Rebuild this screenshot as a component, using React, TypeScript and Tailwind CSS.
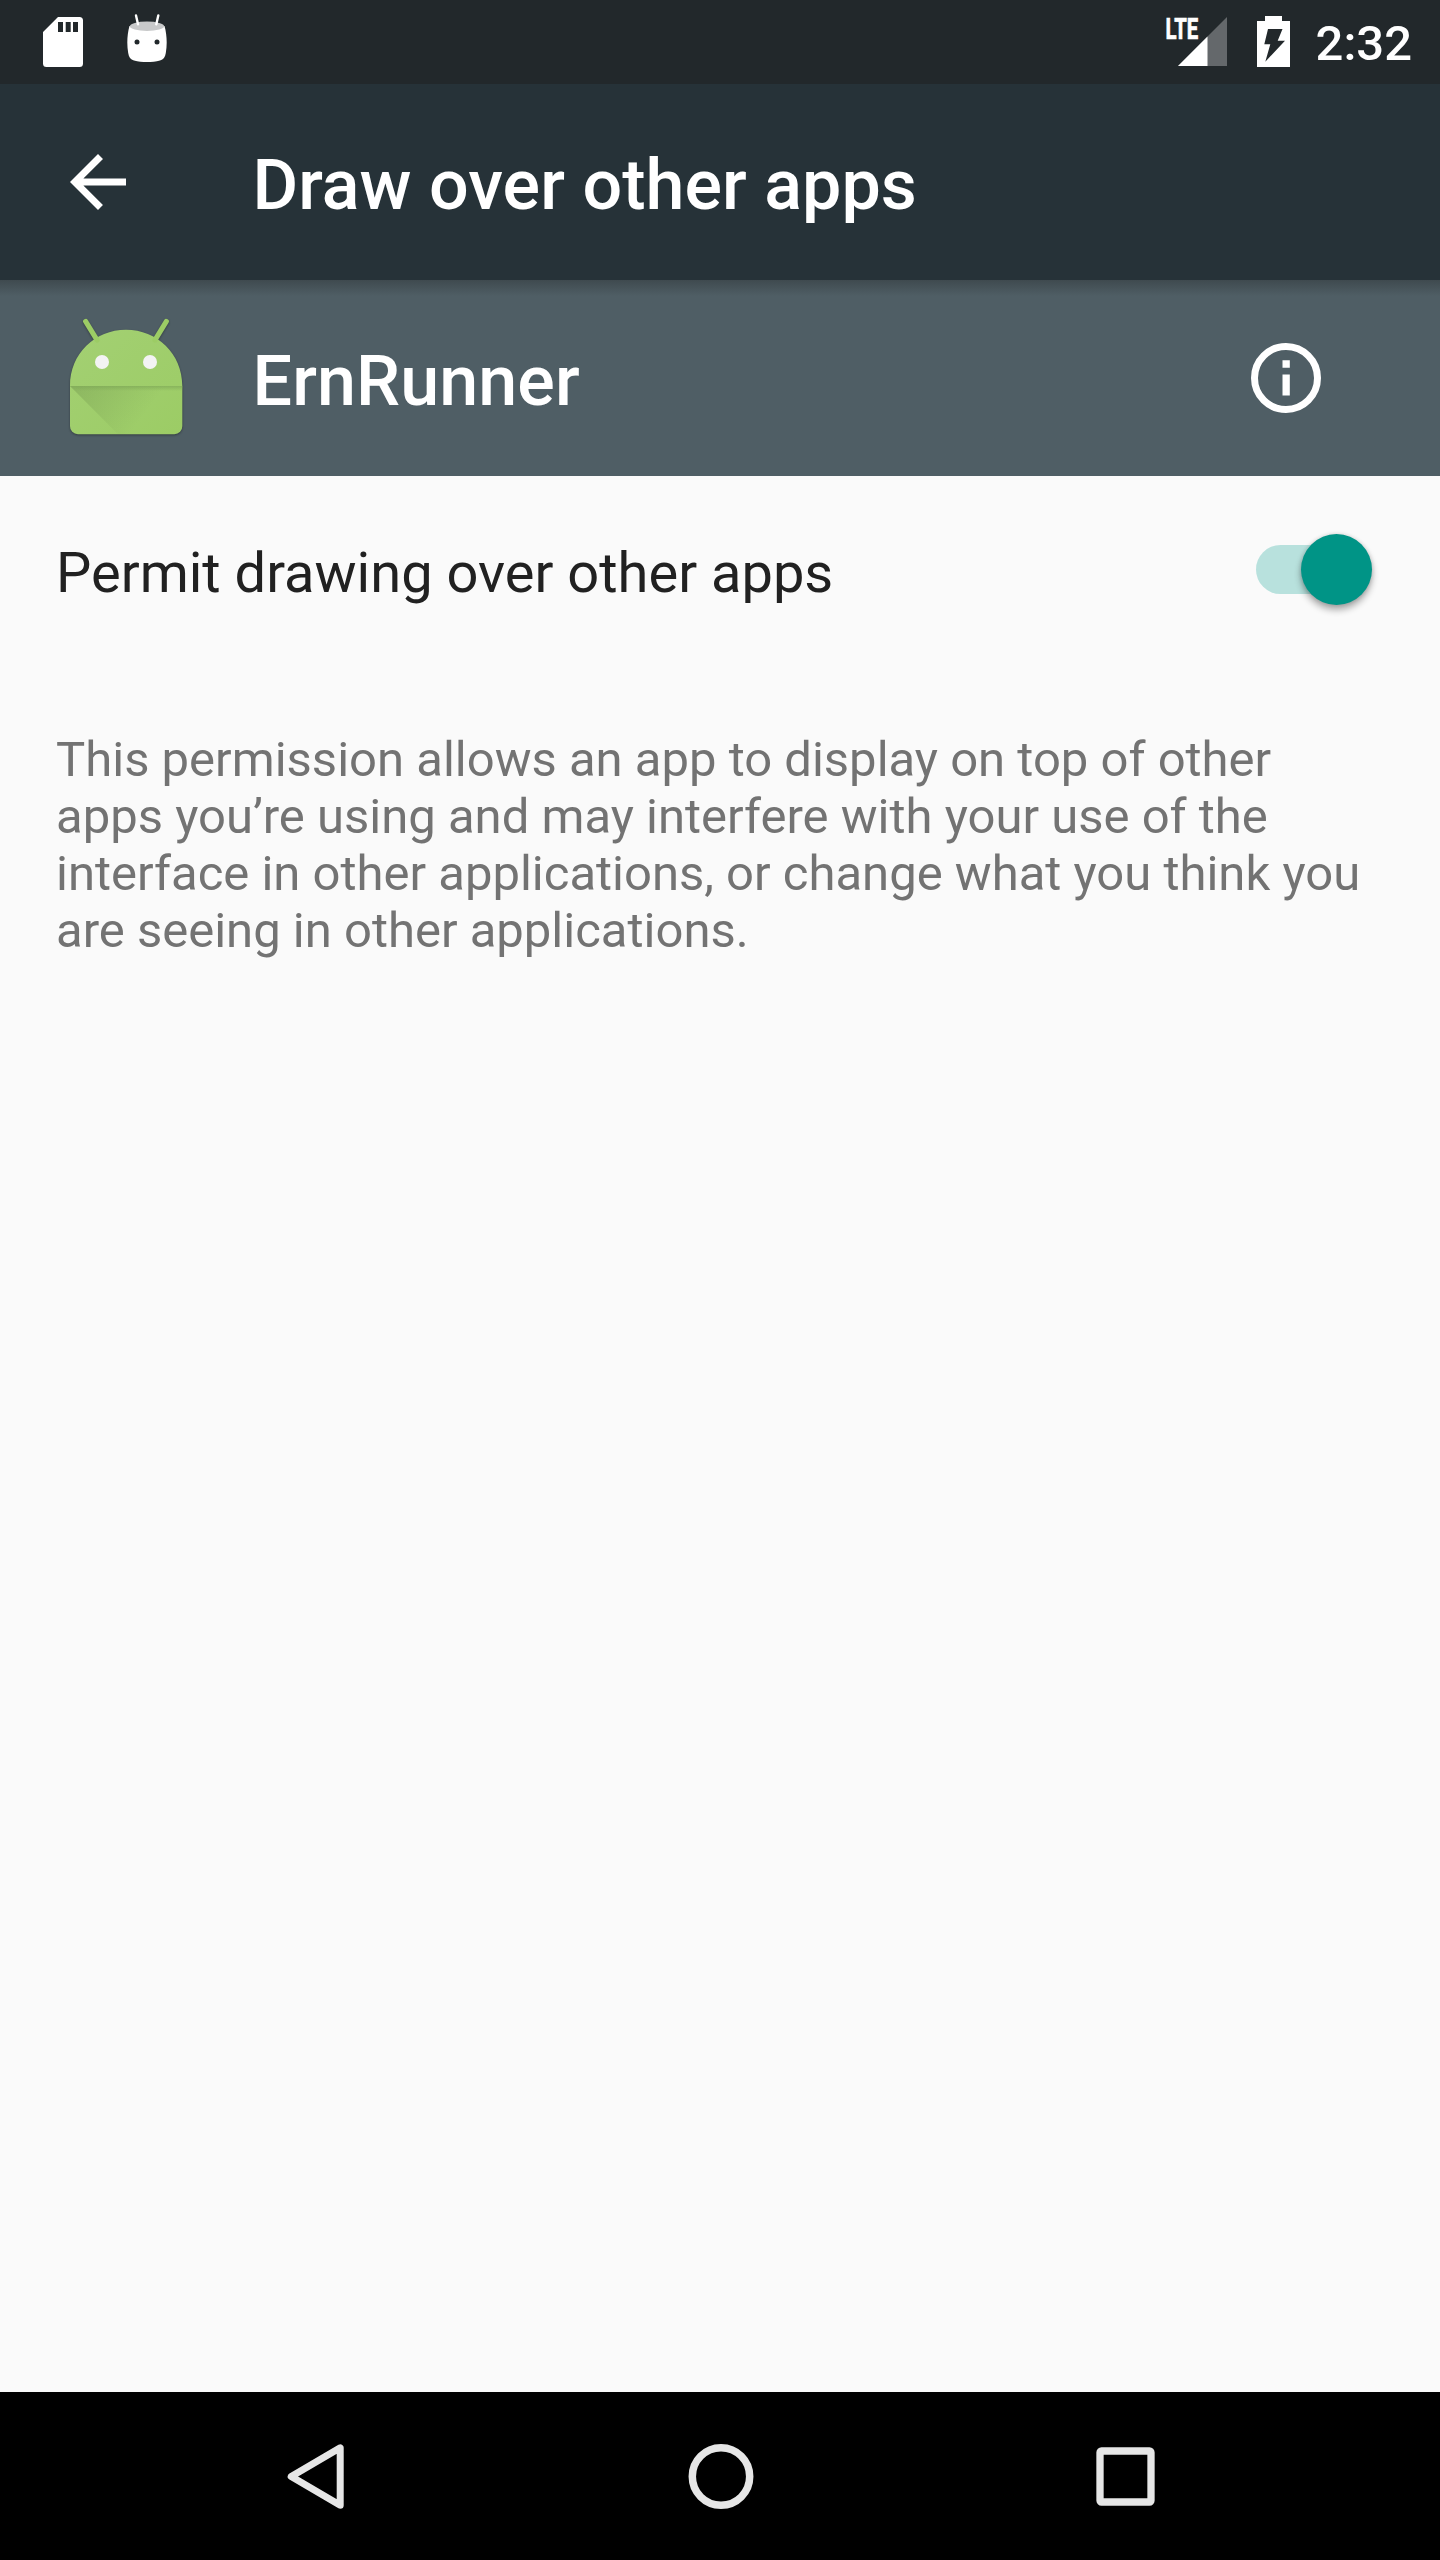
import React from "react";

function SdCardIcon() {
  return (
    <svg className="h-[50px] w-[40px]" viewBox="0 0 40 50">
      <path d="M15 0H36.5a3.5 3.5 0 0 1 3.5 3.5V46.500a3.500 3.500 0 0 1-3.500 3.500H3.500A3.500 3.500 0 0 1 0 46.500V15Z" fill="#fff" />
      <path d="M15 5h5v10h-5zM22.700 5h5v10h-5zM30 5h5v10h-5z" fill="#22282b" />
    </svg>
  );
}

function MarshmallowIcon() {
  return (
    <svg className="h-[50px] w-[40px]" viewBox="0 0 40 50">
      <path d="M2.500 12C.2 20 -.4 30 1.200 39C1.800 43 3.500 45.500 7 46.500C15 48.500 25 48.500 33 46.500C36.500 45.500 38.200 43 38.800 39C40.400 30 39.800 20 37.500 12Z" fill="#fff" />
      <ellipse cx="20" cy="12.200" rx="17.200" ry="4.700" fill="#c8c9ca" />
      <path d="M9 1.500L11 10.300M31.300 1.500L29.300 10.300" stroke="#fff" strokeWidth="2.400" strokeLinecap="round" />
      <circle cx="10" cy="28" r="2.500" fill="#22282b" />
      <circle cx="30" cy="28" r="2.500" fill="#22282b" />
    </svg>
  );
}

function SignalIcon() {
  return (
    <svg className="h-[50px] w-[61px] overflow-visible" viewBox="0 0 61 50">
      <path d="M61 0V49H12Z" fill="#64686b" />
      <path d="M41.500 19.500V49H12Z" fill="#fff" />
      <text x="-0.600" y="22" textLength="32.800" lengthAdjust="spacingAndGlyphs" fontSize="29.500" fontWeight="700" fontFamily="Roboto, sans-serif" fill="#fff" stroke="#fff" strokeWidth="0.700">LTE</text>
    </svg>
  );
}

function BatteryIcon() {
  return (
    <svg className="h-[51px] w-[33px]" viewBox="0 0 33 51">
      <path d="M8 0H25V5H33V51H0V5H8Z" fill="#fff" />
      <path d="M11 13H25.500L20.700 24.700H28L8.300 45.700L13.300 28.300H7.300Z" fill="#22282b" />
    </svg>
  );
}

function LauncherIcon() {
  return (
    <svg className="h-[126px] w-[126px]" viewBox="0 0 126 126">
      <defs>
        <linearGradient id="face" x1="0" y1="0" x2="1" y2="1">
          <stop offset="0" stopColor="#a3d073" />
          <stop offset="1" stopColor="#9ccc65" />
        </linearGradient>
        <linearGradient id="crease" x1="0" y1="0" x2="0" y2="1">
          <stop offset="0" stopColor="#7fa957" stopOpacity=".7" />
          <stop offset="1" stopColor="#7fa957" stopOpacity="0" />
        </linearGradient>
        <linearGradient id="fold" gradientUnits="userSpaceOnUse" x1="18" y1="71" x2="72" y2="112">
          <stop offset="0" stopColor="#5f8040" stopOpacity=".28" />
          <stop offset="1" stopColor="#5f8040" stopOpacity="0" />
        </linearGradient>
      </defs>
      <g className="drop-shadow-[0_1px_1px_rgba(0,0,0,0.35)]">
        <path d="M7 71C7 38.500 32 14.700 63 14.700S119.300 38.500 119.300 71V111a8 8 0 0 1-8 8.300H15a8 8 0 0 1-8-8.300Z" fill="url(#face)" />
        <path d="M22.700 6.500L34 25M103.300 6.500L92 25" stroke="#9ccc65" strokeWidth="5.200" strokeLinecap="round" />
      </g>
      <path d="M7 71H119.300V111a8 8 0 0 1-8 8.300H55Z" fill="url(#fold)" />
      <path d="M7 71H119.300V76H12Z" fill="url(#crease)" />
      <circle cx="39" cy="47" r="7" fill="#f3f3f3" />
      <circle cx="87" cy="47" r="7" fill="#f3f3f3" />
    </svg>
  );
}

function StatusBar() {
  return (
    <div className="flex h-[84px] items-start justify-between bg-[#22282b] pl-[43px] pr-[28px]">
      <div className="flex gap-[44px]">
        <div className="pt-[17px]"><SdCardIcon /></div>
        <div className="pt-[14px]"><MarshmallowIcon /></div>
      </div>
      <div className="flex">
        <div className="pt-[17px]"><SignalIcon /></div>
        <div className="ml-[30px] pt-[16px]"><BatteryIcon /></div>
        <span className="ml-[26px] pt-[2px] text-[49px] font-medium leading-[84px] text-white">2:32</span>
      </div>
    </div>
  );
}

function NavBar() {
  return (
    <div className="flex h-[168px] items-center justify-between bg-black px-[285px]">
      <svg className="h-[70px] w-[61px]" viewBox="0 0 61 70" fill="none" stroke="#e6e6e6" strokeWidth="7" strokeLinejoin="round">
        <path d="M55.200 6.800V64.200L6.200 35.500Z" />
      </svg>
      <svg className="h-[70px] w-[70px]" viewBox="0 0 70 70" fill="none" stroke="#e6e6e6" strokeWidth="7.500">
        <circle cx="35" cy="35.500" r="28.700" />
      </svg>
      <svg className="h-[70px] w-[60px]" viewBox="0 0 60 70" fill="none" stroke="#e6e6e6" strokeWidth="7.300" strokeLinejoin="round">
        <rect x="5" y="10" width="51" height="51" rx="1.500" />
      </svg>
    </div>
  );
}

export default function App() {
  return (
    <div className="flex h-[2560px] w-[1440px] flex-col overflow-hidden bg-[#fafafa] font-['Roboto',sans-serif]">
      <StatusBar />
      <header className="flex h-[196px] items-center bg-[#263238] pl-[70px]">
        <svg className="h-[56px] w-[56px]" viewBox="0 0 56 56">
          <path d="M56 24.500H13.400L33 4.950L28 0L0 28L28 56L32.950 51.050L13.400 31.500H56Z" fill="#fff" />
        </svg>
        <h1 className="ml-[126.5px] pt-[6px] text-[70px] font-medium leading-[80px] tracking-[0.05px] text-white">Draw over other apps</h1>
      </header>
      <section className="flex h-[196px] items-center bg-[#4f5e65] bg-linear-to-b from-[#3f4a4f] to-[#4f5e65] to-[16px] pl-[63px] pr-[119px]">
        <LauncherIcon />
        <h2 className="ml-[63.5px] flex-1 pt-[6px] text-[70px] font-medium leading-[80px] tracking-[0.1px] text-white">ErnRunner</h2>
        <svg className="h-[70px] w-[70px]" viewBox="0 0 70 70">
          <circle cx="35" cy="35" r="31.500" fill="none" stroke="#fff" strokeWidth="7" />
          <path d="M31.500 17.300H38.800V24.700H31.500ZM31.500 31.500H38.800V52.500H31.500Z" fill="#fff" />
        </svg>
      </section>
      <main className="flex-1">
        <div className="flex h-[194px] items-center justify-between pl-[56px] pr-[67px]">
          <span className="text-[56px] leading-[64px] text-[#212121]">Permit drawing over other apps</span>
          <div className="mt-[-8px] flex h-[72px] w-[117px] items-center rounded-full">
            <div className="h-[49px] w-[96px] rounded-l-full bg-[#b8e1dd]" />
            <div className="-ml-[51px] size-[71px] shrink-0 rounded-full bg-[#009486] shadow-[0_5px_7px_rgba(0,0,0,0.32),0_0_4px_rgba(0,0,0,0.15)]" />
          </div>
        </div>
        <p className="mt-[61px] pl-[56px] text-[49px] leading-[57px] text-[#737373]">
          This permission allows an app to display on top of other<br />
          apps you’re using and may interfere with your use of the<br />
          interface in other applications, or change what you think you<br />
          are seeing in other applications.
        </p>
      </main>
      <NavBar />
    </div>
  );
}
